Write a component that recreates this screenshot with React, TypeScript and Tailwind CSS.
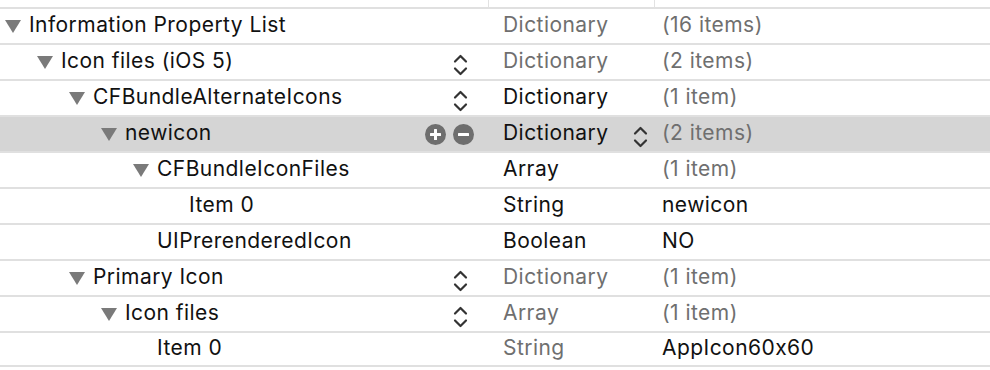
import React from "react";

type Row = {
  level: number;
  tri: boolean;
  key: string;
  ctrl: "none" | "stepper" | "plusminus";
  type: string;
  typeDark: boolean;
  typeStepper?: boolean;
  value: string;
  valueDark: boolean;
  selected?: boolean;
};

const rows: Row[] = [
  { level: 0, tri: true, key: "Information Property List", ctrl: "none", type: "Dictionary", typeDark: false, value: "(16 items)", valueDark: false },
  { level: 1, tri: true, key: "Icon files (iOS 5)", ctrl: "stepper", type: "Dictionary", typeDark: false, value: "(2 items)", valueDark: false },
  { level: 2, tri: true, key: "CFBundleAlternateIcons", ctrl: "stepper", type: "Dictionary", typeDark: true, value: "(1 item)", valueDark: false },
  { level: 3, tri: true, key: "newicon", ctrl: "plusminus", type: "Dictionary", typeDark: true, typeStepper: true, value: "(2 items)", valueDark: false, selected: true },
  { level: 4, tri: true, key: "CFBundleIconFiles", ctrl: "none", type: "Array", typeDark: true, value: "(1 item)", valueDark: false },
  { level: 5, tri: false, key: "Item 0", ctrl: "none", type: "String", typeDark: true, value: "newicon", valueDark: true },
  { level: 4, tri: false, key: "UIPrerenderedIcon", ctrl: "none", type: "Boolean", typeDark: true, value: "NO", valueDark: true },
  { level: 2, tri: true, key: "Primary Icon", ctrl: "stepper", type: "Dictionary", typeDark: false, value: "(1 item)", valueDark: false },
  { level: 3, tri: true, key: "Icon files", ctrl: "stepper", type: "Array", typeDark: false, value: "(1 item)", valueDark: false },
  { level: 4, tri: false, key: "Item 0", ctrl: "none", type: "String", typeDark: false, value: "AppIcon60x60", valueDark: true },
];

const indent = ["pl-[5px]", "pl-[37px]", "pl-[69px]", "pl-[101px]", "pl-[133px]", "pl-[165px]"];

function Triangle({ show }: { show: boolean }) {
  return (
    <span className="w-[16px] h-[13px] mr-[8px] shrink-0 mt-[3px] flex">
      {show && (
        <svg width="16" height="13" viewBox="0 0 16 13">
          <polygon points="0,0 16,0 8,13" fill="#7a7a7a" />
        </svg>
      )}
    </span>
  );
}

function Stepper({ className }: { className: string }) {
  return (
    <svg width="15" height="22" viewBox="0 0 15 22" className={className}>
      <path d="M2 7.5 L7.5 2 L13 7.5" fill="none" stroke="#333333" strokeWidth="2.2" strokeLinecap="round" strokeLinejoin="round" />
      <path d="M2 14.5 L7.5 20 L13 14.5" fill="none" stroke="#333333" strokeWidth="2.2" strokeLinecap="round" strokeLinejoin="round" />
    </svg>
  );
}

function Circle({ plus }: { plus: boolean }) {
  return (
    <svg width="21" height="21" viewBox="0 0 21 21">
      <circle cx="10.5" cy="10.5" r="10.5" fill="#6e6e6e" />
      <rect x="5" y="9" width="11" height="3" rx="0.5" fill="#ffffff" />
      {plus && <rect x="9" y="5" width="3" height="11" rx="0.5" fill="#ffffff" />}
    </svg>
  );
}

export default function App() {
  return (
    <div
      className="w-[990px] h-[370px] bg-white overflow-hidden text-[21px] text-[#111111]"
      style={{ fontFamily: "Inter, 'Liberation Sans', sans-serif" }}
    >
      <div className="flex h-[7px]">
        <div className="w-[489px] border-r border-[#e2e2e2]" />
        <div className="w-[166px] border-r border-[#e2e2e2]" />
        <div className="flex-1" />
      </div>
      {rows.map((r, i) => (
        <div
          key={i}
          className={
            "flex h-[36px] border-t-2 border-[#e0e0e0] " +
            (r.selected ? "bg-[#d5d5d5] " : "bg-white ") +
            (i === rows.length - 1 ? "border-b-2" : "")
          }
        >
          <div className={"w-[489px] flex items-center pb-[3px] " + indent[r.level]}>
            <Triangle show={r.tri} />
            <span className="flex-1 whitespace-nowrap tracking-[0.45px]">{r.key}</span>
            {r.ctrl === "stepper" && <Stepper className="mr-[21px] mt-[8px]" />}
            {r.ctrl === "plusminus" && (
              <div className="flex gap-[7px] mr-[15px] mt-[3px]">
                <Circle plus />
                <Circle plus={false} />
              </div>
            )}
          </div>
          <div className="w-[166px] flex items-center pb-[3px] pl-[14px]">
            <span className={"flex-1 whitespace-nowrap tracking-[0.45px] " + (r.typeDark ? "text-[#111111]" : "text-[#6f6f6f]")}>
              {r.type}
            </span>
            {r.typeStepper && <Stepper className="mr-[7px] mt-[8px]" />}
          </div>
          <div className="flex-1 flex items-center pb-[3px] pl-[7px]">
            <span className={"whitespace-nowrap tracking-[0.45px] " + (r.valueDark ? "text-[#111111]" : "text-[#6f6f6f]")}>
              {r.value}
            </span>
          </div>
        </div>
      ))}
    </div>
  );
}
